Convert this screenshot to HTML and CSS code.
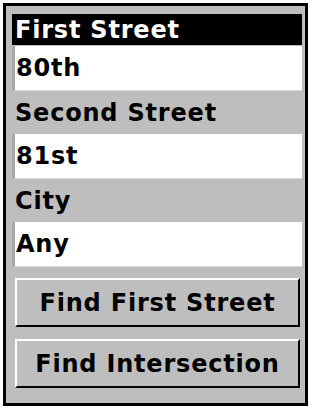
FILE: index.html
```html
<!DOCTYPE html>
<html lang="en">
<head>
    <meta charset="UTF-8">
    <meta name="viewport" content="width=device-width, initial-scale=1.0">
    <title>Find Intersection</title>
    <link rel="stylesheet" href="styles.css">
</head>
<body>
    <div class="panel">
        <div class="label selected">First Street</div>
        <div class="field">80th</div>
        <div class="label">Second Street</div>
        <div class="field">81st</div>
        <div class="label">City</div>
        <div class="field">Any</div>
        <div class="buttons">
            <button class="btn">Find First Street</button>
            <button class="btn">Find Intersection</button>
        </div>
    </div>
</body>
</html>
```

FILE: styles.css
```css
body {
    margin: 0;
    padding: 0;
    background-color: white;
    font-family: "DejaVu Sans", sans-serif;
}
.panel {
    box-sizing: border-box;
    width: 305px;
    height: 403px;
    margin: 3px;
    border: 3px solid black;
    background-color: #bebebe;
    padding: 8px 3px 0 6px;
    display: flex;
    flex-direction: column;
}
.label,
.field,
.btn {
    font-family: "DejaVu Sans", sans-serif;
    font-size: 24px;
    font-weight: bold;
    letter-spacing: 0.8px;
}
.label {
    height: 43px;
    display: flex;
    align-items: center;
    padding-left: 3px;
    color: black;
}
.label.selected {
    height: 31px;
    background-color: black;
    color: white;
    margin-bottom: 1px;
}
.field {
    box-sizing: border-box;
    height: 45px;
    display: flex;
    align-items: center;
    padding-left: 1px;
    background-color: white;
    border-left: 3px solid #a9a9a9;
    border-bottom: 1px solid #d8d8d8;
    color: black;
}
.buttons {
    display: flex;
    flex-direction: column;
    gap: 12px;
    padding: 11px 2px 0 3px;
}
.btn {
    box-sizing: border-box;
    height: 49px;
    background-color: #bebebe;
    color: black;
    border-top: 2px solid white;
    border-left: 2px solid white;
    border-right: 2px solid black;
    border-bottom: 2px solid black;
    padding: 0;
    text-align: center;
}
```
